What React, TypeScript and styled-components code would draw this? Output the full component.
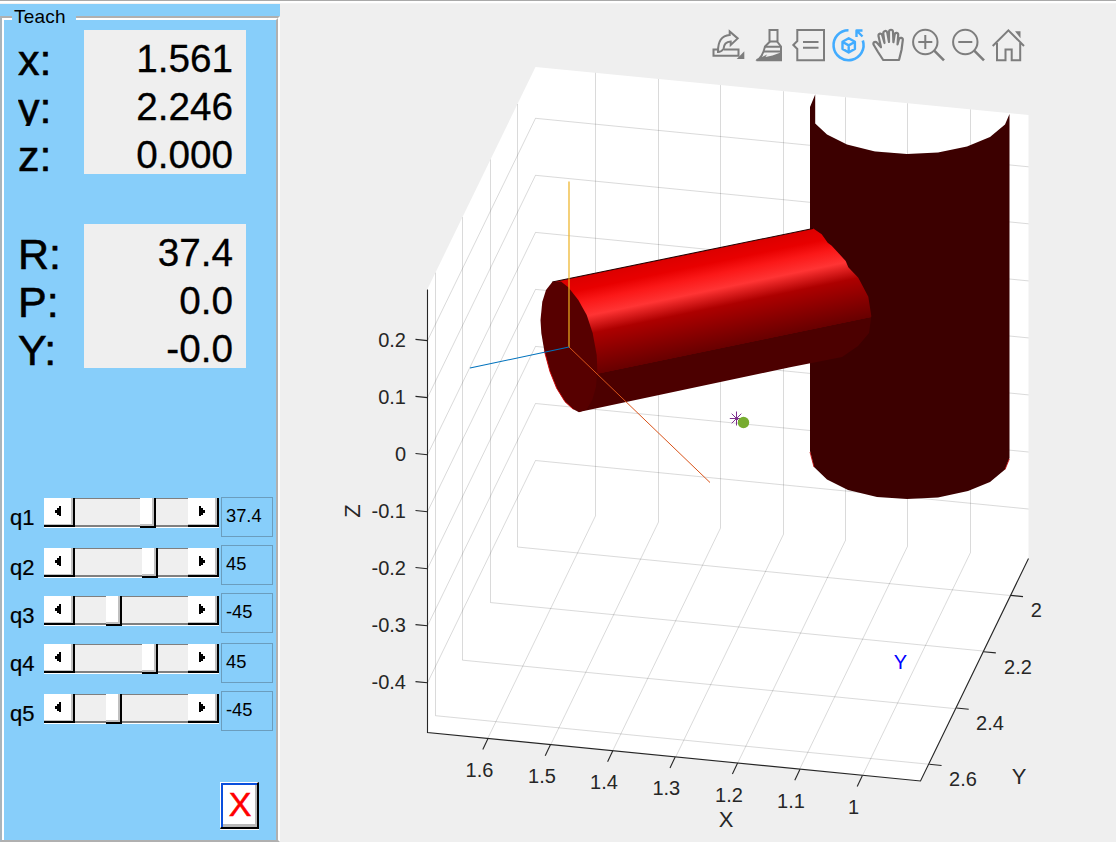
import React from "react";
import styled, { createGlobalStyle } from "styled-components";

const GlobalStyle = createGlobalStyle`
  * { box-sizing: border-box; }
  body {
    margin: 0;
    background: #efefef;
    font-family: "Liberation Sans", Arial, Helvetica, sans-serif;
    color: #000;
  }
`;

const Window = styled.div`
  width: 1116px;
  height: 842px;
  overflow: hidden;
  background: #efefef;
  border-top: 1px solid #a9a9a9;
  display: flex;
  flex-direction: column;
`;

const TopEdge = styled.div`
  height: 3px;
  flex: none;
  background: linear-gradient(#fff 0 2px, #f3f3f3 2px 3px);
`;

const Content = styled.main`
  flex: 1;
  display: flex;
  min-height: 0;
`;

const Panel = styled.aside`
  width: 280px;
  flex: none;
  background: #87cefa;
  padding-top: 12px;
`;

const Frame = styled.section`
  height: 826px;
  border-style: solid;
  border-width: 2px;
  border-color: #b0b0b0;
  border-right-color: #fff;
  border-bottom-color: #b0b0b0;
  border-left-color: #a8b4bc;
`;

const FrameInner = styled.div`
  height: 822px;
  border-style: solid;
  border-width: 2px 2px 0 2px;
  border-color: #fff #b0b0b0 #fff #fff;
`;

const Legend = styled.h1`
  width: 64px;
  height: 20px;
  margin: -12px 0 0 8px;
  padding-left: 2px;
  background: #87cefa;
  font-size: 19px;
  font-weight: 400;
  line-height: 18px;
  letter-spacing: 0.2px;
  white-space: nowrap;
`;

const Readout = styled.div<{ $gap: number }>`
  display: flex;
  margin-top: ${(p) => p.$gap}px;
  height: 144px;
`;

const ReadoutLabels = styled.div`
  width: 80px;
  padding-left: 14px;
`;

const AxisName = styled.div<{ $clip?: boolean }>`
  height: 48px;
  overflow: ${(p) => (p.$clip ? "hidden" : "visible")};
  font-size: 43px;
  line-height: 61px;
  -webkit-text-stroke: 0.6px #000;
  white-space: nowrap;
`;

const ReadoutValues = styled.div`
  width: 162px;
  background: #efefef;
  padding-right: 13px;
  text-align: right;
`;

const Value = styled.div`
  height: 48px;
  font-size: 38.7px;
  line-height: 57px;
  -webkit-text-stroke: 0.3px #000;
`;

const Joints = styled.div`
  margin-top: 129px;
  height: 240px;
`;

const JointRow = styled.div<{ $height: number }>`
  display: flex;
  height: ${(p) => p.$height}px;
`;

const JointName = styled.label<{ $drop: number }>`
  width: 40px;
  padding: ${(p) => p.$drop + 7}px 0 0 6px;
  font-size: 22px;
  line-height: 26px;
  -webkit-text-stroke: 0.2px #000;
`;

const Track = styled.div<{ $drop: number }>`
  display: flex;
  width: 175px;
  height: 30px;
  margin-top: ${(p) => p.$drop}px;
`;

const StepButton = styled.button`
  width: 31px;
  height: 29px;
  padding: 0 2px 0 0;
  border: 0;
  border-right: 2px solid #000;
  border-bottom: 2px solid #000;
  background: #fff;
  box-shadow: inset -2px -1px 0 #c0c0c0, 0 1px 0 #fff;
  display: flex;
  align-items: center;
  justify-content: center;
`;

const Groove = styled.div`
  width: 113px;
  height: 29px;
  border-top: 1px solid #7f7f7f;
  border-bottom: 2px solid #7f7f7f;
  background: #efefef;
  box-shadow: 0 1px 0 #fff;
`;

const Thumb = styled.div`
  width: 16px;
  height: 30px;
  margin-top: -1px;
  background: #fff;
  border-right: 2px solid #000;
  border-bottom: 2px solid #000;
  box-shadow: inset -2px -2px 0 #c0c0c0;
`;

const ValueBox = styled.div`
  width: 52px;
  height: 40px;
  margin-left: 2px;
  padding-left: 4px;
  border: 1px solid #6b9dbd;
  font-size: 18.3px;
  line-height: 36px;
`;

const CloseButton = styled.button`
  display: block;
  width: 39px;
  height: 47px;
  margin: 45px 0 0 216px;
  padding: 0 0 2px 2px;
  border-style: solid;
  border-width: 1px 2px 2px 1px;
  border-color: #fff #000 #000 #fff;
  background: #fff;
  box-shadow: inset 2px 2px 0 #0a4fdc, inset -2px -3px 0 #b8b8b8, 0 1px 0 #fff;
  color: #f00;
  font: 34px/40px "Liberation Sans", Arial, sans-serif;
  -webkit-text-stroke: 0.5px #f00;
`;

const Figure = styled.section`
  position: relative;
  width: 836px;
  height: 838px;
`;

const Toolbar = styled.nav`
  position: absolute;
  top: 20px;
  left: 428px;
  display: flex;
`;

const Tool = styled.svg<{ $active?: boolean }>`
  width: 40px;
  height: 40px;
  fill: none;
  stroke: ${(p) => (p.$active ? "#42acff" : "#7d7d7d")};
  stroke-width: 2;
`;

const Plot = styled.svg`
  display: block;
  font-size: 20px;
  fill: #262626;
`;

const joints = [
  { name: "q1", value: "37.4", thumb: 65, drop: 1, height: 48 },
  { name: "q2", value: "45", thumb: 67, drop: 3, height: 48 },
  { name: "q3", value: "-45", thumb: 31, drop: 3, height: 50 },
  { name: "q4", value: "45", thumb: 67, drop: 1, height: 48 },
  { name: "q5", value: "-45", thumb: 31, drop: 3, height: 46 },
];

const xGrid = [595.5, 658.5, 720.5, 783.5, 845.5, 907.5, 970.5];
const xTicks = [
  { label: "1.6", tx: 479.5, ty: 776.5 },
  { label: "1.5", tx: 542, ty: 783 },
  { label: "1.4", tx: 604, ty: 789 },
  { label: "1.3", tx: 666.3, ty: 795 },
  { label: "1.2", tx: 729, ty: 801.5 },
  { label: "1.1", tx: 791, ty: 807.5 },
  { label: "1", tx: 853.5, ty: 813.7 },
];
const yTicks = [
  { label: "2", wall: 517.5, tx: 1036.3, ty: 617 },
  { label: "2.2", wall: 490.5, tx: 1018, ty: 674 },
  { label: "2.4", wall: 462.5, tx: 990, ty: 730 },
  { label: "2.6", wall: 435.5, tx: 963, ty: 786 },
];
const zGrid = [118.3, 175.3, 232.4, 289.4, 346.4, 403.5, 460.5];
const zLabels = ["0.2", "0.1", "0", "-0.1", "-0.2", "-0.3", "-0.4"];

const Arrow = ({ right }: { right?: boolean }) => (
  <svg width="8" height="11" viewBox="0 0 8 11" fill="#000">
    {right ? <path d="M1 0h2v2h2v2h2v3H5v2H3v1H1z" /> : <path d="M7 0H5v2H3v2H1v3h2v2h2v1h2z" />}
  </svg>
);

const TeachPanel = () => (
  <Panel>
    <Frame>
      <FrameInner>
        <Legend>Teach</Legend>
        <Readout $gap={2}>
          <ReadoutLabels>
            {["x:", "y:", "z:"].map((t) => <AxisName key={t} $clip={t === "y:"}>{t}</AxisName>)}
          </ReadoutLabels>
          <ReadoutValues>
            {["1.561", "2.246", "0.000"].map((t) => <Value key={t}>{t}</Value>)}
          </ReadoutValues>
        </Readout>
        <Readout $gap={50}>
          <ReadoutLabels>
            {["R:", "P:", "Y:"].map((t) => <AxisName key={t}>{t}</AxisName>)}
          </ReadoutLabels>
          <ReadoutValues>
            {["37.4", "0.0", "-0.0"].map((t) => <Value key={t}>{t}</Value>)}
          </ReadoutValues>
        </Readout>
        <Joints>
          {joints.map((j) => (
            <JointRow key={j.name} $height={j.height}>
              <JointName $drop={j.drop}>{j.name}</JointName>
              <Track $drop={j.drop}>
                <StepButton><Arrow /></StepButton>
                <Groove><Thumb style={{ marginLeft: j.thumb }} /></Groove>
                <StepButton><Arrow right /></StepButton>
              </Track>
              <ValueBox>{j.value}</ValueBox>
            </JointRow>
          ))}
        </Joints>
        <CloseButton>X</CloseButton>
      </FrameInner>
    </Frame>
  </Panel>
);

const FigureToolbar = () => (
  <Toolbar>
    <Tool viewBox="0 0 40 40">
      <path d="M10 25.500H5.500v6.200h25V25.500H16" />
      <path d="M10 28C9.800 17 14 11.500 21.700 11V7.500l8 6.900-7 6.600v-3.500C18 17.700 15.800 20 15.500 25c-1.500 2-3.500 3-5.500 3z" />
      <path d="M28.700 35l7.600-7.700V35z" fill="#7d7d7d" stroke="none" />
    </Tool>
    <Tool viewBox="0 0 40 40">
      <path d="M21.500 18V6h8v12l3.500 4.500v13.700H8.500c5-2 7-7 8.500-13.700z" />
      <path d="M21 17.500h9M17 22.700h16M15.500 27.500l17.500 0" />
      <path d="M7 36.800c4-1 6.500-4 8-8l-1 4.200 5-2.500-1.500 2.500 7-1.500 9.500-3.500v8.800z" fill="#7d7d7d" stroke="none" />
    </Tool>
    <Tool viewBox="0 0 40 40">
      <path d="M9.300 6H36v30.300H9.300V25l-4-4 4-4zM15 18h15.500M15 23.700h15.500" />
    </Tool>
    <Tool $active viewBox="0 0 40 40" strokeLinejoin="round">
      <path strokeWidth="2.600" d="M20.500 6.200A15 15 0 1 0 34.800 16.500" />
      <path strokeWidth="2.400" d="M34.500 6.500H28.500V13M29 7l5.500 5.500" />
      <path strokeWidth="2.400" d="M20.700 14.200l6.200 3.500v7.200l-6.200 3.600-6.200-3.600v-7.200zM14.700 18l6 3.400 6-3.400M20.700 21.400v7" />
    </Tool>
    <Tool viewBox="0 0 40 40" strokeLinejoin="round">
      <path strokeWidth="2.200" d="M15.200 36L10 28 5.500 20.500c-.6-2.700 2-3.500 3.500-1.700l4 4.500-2.500-11.300c-.3-2.700 3-3.300 3.700-.7l2.300 7.700-1.200-9.500c-.2-3 3.500-3.500 4-.7l1.700 9.200V8c.2-3 3.800-3 4 0l.4 10.200 1.300-7.700c.6-2.500 3.700-2 3.500.7L29.500 20.500l1.500-5.500c.8-2 4.200-1.300 3.800 1.200L33.500 26 31 36z" />
    </Tool>
    <Tool viewBox="0 0 40 40">
      <circle cx="17.300" cy="18" r="12.200" />
      <path d="M10.300 18h14M17.300 11v14" />
      <path strokeWidth="2.600" d="M26.200 26.700l9.800 9.700" />
    </Tool>
    <Tool viewBox="0 0 40 40">
      <circle cx="17.300" cy="18" r="12.200" />
      <path d="M10.300 18h14" />
      <path strokeWidth="2.600" d="M26.200 26.700l9.800 9.700" />
    </Tool>
    <Tool viewBox="0 0 40 40">
      <path d="M4.700 22L20.400 6.300 36 22M9 19v17.300h8.500V25.500h6.200v10.800h8.500V19" />
      <path d="M27 7.300h5.500v7z" fill="#7d7d7d" stroke="none" />
    </Tool>
  </Toolbar>
);

const RobotPlot = () => (
  <Plot width="836" height="838" viewBox="280 4 836 838">
    <defs>
      <linearGradient id="arm" gradientUnits="userSpaceOnUse" x1="561" y1="281" x2="581" y2="377.600">
        <stop offset="0" stopColor="#dc0000" />
        <stop offset=".13" stopColor="#e80000" />
        <stop offset=".25" stopColor="#fb1818" />
        <stop offset=".4" stopColor="#ff3434" />
        <stop offset=".46" stopColor="#e32222" />
        <stop offset=".58" stopColor="#ad0000" />
        <stop offset=".8" stopColor="#880000" />
        <stop offset=".995" stopColor="#680000" />
        <stop offset="1" stopColor="#4c0000" />
      </linearGradient>
    </defs>
    <path d="M535.500 67L1028.500 115V558.500L920.500 781 427.500 732.500V289z" fill="#fff" />
    <g stroke="#262626" strokeOpacity=".17" fill="none">
      {xGrid.map((x) => {
        const d = (x - 535.5) * 0.0977;
        return <path key={x} d={`M${x} ${67 + d}V${510 + d}l-107.700 222.500`} />;
      })}
      {yTicks.map((t, i) => {
        const d = (535.5 - t.wall) * 2.057;
        return <path key={i} d={`M${t.wall} ${67 + d}V${510 + d}l493 48.500`} />;
      })}
      {zGrid.map((z) => <path key={z} d={`M427.500 ${z + 222.3}L535.500 ${z}l493 48.500`} />)}
    </g>
    <g stroke="#262626" strokeWidth="1.100" fill="none">
      <path d="M427.500 289.500V732.500L920.500 781 1028.500 558.500" />
      {zGrid.map((z) => <path key={z} d={`M427.500 ${z + 222.3}l-12-1.200`} />)}
      {xTicks.map((t, i) => <path key={i} d={`M${488 + i * 62.4} ${738.5 + i * 6.15}l-5.200 11`} />)}
      {yTicks.map((t, i) => <path key={i} d={`M${1010.7 - i * 27.15} ${595.4 + i * 56.3}l12.300 1.200`} />)}
    </g>
    {zGrid.map((z, i) => (
      <text key={z} x="406" y={z + 228.5} textAnchor="end">{zLabels[i]}</text>
    ))}
    {[...xTicks, ...yTicks].map((t) => (
      <text key={t.label} x={t.tx} y={t.ty} textAnchor="middle">{t.label}</text>
    ))}
    <g fontSize="22" textAnchor="middle">
      <text x="726" y="827">X</text>
      <text x="1019" y="783.700">Y</text>
      <text transform="translate(360 511) rotate(-90)">Z</text>
    </g>
    <text x="900.500" y="668.700" textAnchor="middle" fill="#00f">Y</text>

    <path
      fill="#3c0000"
      d="M815.200 94.500L810 107V451l4 16 13 12.500 21 10.500 29 7 30 2 31-1.500 30-6.500 22-9 15-12.500 4.500-11.500V114l-4.500 10.500-15 12.500-23 9.500-29 6-31 1.500-32-2.500-28-7-20-10-11.800-11z"
    />
    <path d="M810 452l4 15M1009.300 459l-4.300 10.500" stroke="#c00000" strokeWidth=".8" />
    <path
      fill="url(#arm)"
      d="M552.300 282L813.300 228.500 821.700 234.300 827.700 242.700 831.700 245.700 845.700 261 848.300 267.300 858.300 277.700 868.300 296.700 871.300 316 869 333 858 346 842 357 790 367.300 579 412z"
    />
    <path d="M552.300 282L813 228.500" stroke="#250000" strokeWidth="1.100" />
    <path
      fill="#570000"
      d="M552.300 282L546 290 542.300 301.700 540.500 320 541.300 333 544.300 350.700 550 371.700 556.700 388.300 565 401.700 573.300 409.300 579 412.300 586.700 409.300 592.300 400 596 386.700 597.300 370 596.700 355 592.700 333.300 586.700 315 578.300 300 568.300 287.300 561 281.500z"
    />
    <path d="M544.300 350.700L550 371.700 556.700 388.300 565 401.700 573.300 409.300" stroke="#d00000" strokeWidth=".9" fill="none" />
    <path d="M569 347V181.500" stroke="#edb120" strokeWidth="1.200" />
    <path d="M569 347l-99 21" stroke="#0072bd" strokeWidth="1.100" />
    <path d="M569 347l141 135.500" stroke="#d95319" strokeWidth="1" />
    <path d="M736.500 411.500v14M729.800 418.500h13.400M731.700 413.700l9.600 9.600M741.300 413.700l-9.600 9.600" stroke="#7e2f8e" strokeWidth="1" />
    <circle cx="743.500" cy="422.500" r="5.700" fill="#77ac30" />
  </Plot>
);

export default function App() {
  return (
    <>
      <GlobalStyle />
      <Window>
        <TopEdge />
        <Content>
          <TeachPanel />
          <Figure>
            <RobotPlot />
            <FigureToolbar />
          </Figure>
        </Content>
      </Window>
    </>
  );
}
